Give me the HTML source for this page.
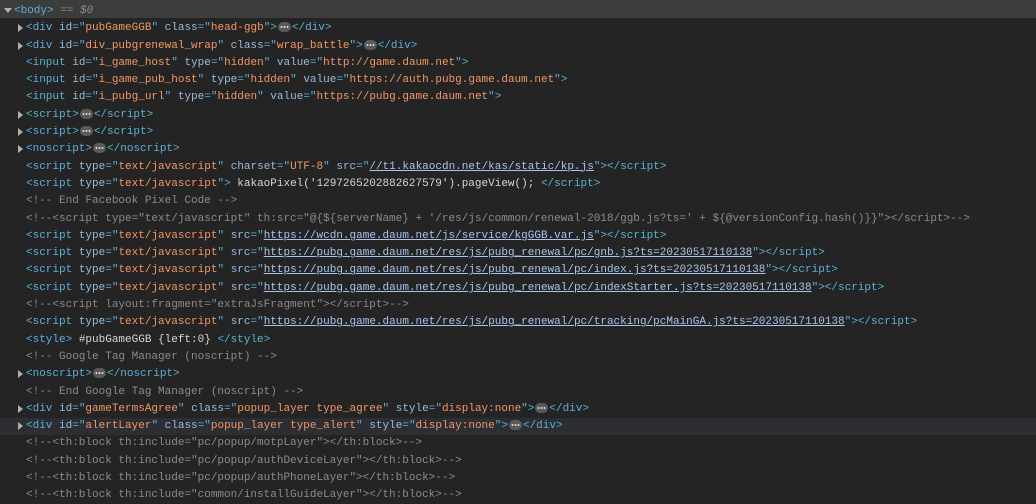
<!DOCTYPE html>
<html><head><meta charset="utf-8"><style>
html,body{margin:0;padding:0;background:#242424;width:1036px;height:504px;overflow:hidden;position:relative}
#hb{position:absolute;left:0;top:0;width:1036px;height:18px;background:#3c3c3c}
#w{position:relative;font-family:"Liberation Mono",monospace;font-size:11px;color:#d6d6d6;padding-top:3px}
.r{height:17.3px;line-height:17.3px;white-space:pre;position:relative;padding-left:26px}
.r.b{padding-left:14px}
.sel{background:#2c2e33}
.t{color:#5db0d7}.a{color:#9bbbdc}.v{color:#f29766}.c{color:#8b8b8b}.l{color:#a9c4ec;text-decoration:underline}
.ar{position:absolute;left:18px;top:4px;width:0;height:0;border-top:4px solid transparent;border-bottom:4px solid transparent;border-left:5px solid #b0b0b0}
.ad{position:absolute;left:4px;top:5px;width:0;height:0;border-left:4px solid transparent;border-right:4px solid transparent;border-top:5px solid #b0b0b0}
.e{display:inline-block;width:13px;height:10px;vertical-align:middle;margin:0 1px;position:relative;top:0}
.g{color:#8b8b8b;font-style:italic}
</style></head><body>
<div id="hb"></div>
<svg width="0" height="0" style="position:absolute"><defs><symbol id="el" viewBox="0 0 13 10"><rect x="0" y="0" width="13" height="10" rx="5" fill="#5a5a5a"/><circle cx="3.5" cy="5" r="1" fill="#ddd"/><circle cx="6.5" cy="5" r="1" fill="#ddd"/><circle cx="9.5" cy="5" r="1" fill="#ddd"/></symbol></defs></svg>
<div id="w">
<div class="r b"><span class="ad"></span><span class="t">&lt;body&gt;</span> <span class="g">== $0</span></div>
<div class="r"><span class="ar"></span><span class="t">&lt;div</span> <span class="a">id</span><span class="t">="</span><span class="v">pubGameGGB</span><span class="t">"</span> <span class="a">class</span><span class="t">="</span><span class="v">head-ggb</span><span class="t">"&gt;</span><svg class="e"><use href="#el"/></svg><span class="t">&lt;/div&gt;</span></div>
<div class="r"><span class="ar"></span><span class="t">&lt;div</span> <span class="a">id</span><span class="t">="</span><span class="v">div_pubgrenewal_wrap</span><span class="t">"</span> <span class="a">class</span><span class="t">="</span><span class="v">wrap_battle</span><span class="t">"&gt;</span><svg class="e"><use href="#el"/></svg><span class="t">&lt;/div&gt;</span></div>
<div class="r"><span class="t">&lt;input</span> <span class="a">id</span><span class="t">="</span><span class="v">i_game_host</span><span class="t">"</span> <span class="a">type</span><span class="t">="</span><span class="v">hidden</span><span class="t">"</span> <span class="a">value</span><span class="t">="</span><span class="v">http://game.daum.net</span><span class="t">"&gt;</span></div>
<div class="r"><span class="t">&lt;input</span> <span class="a">id</span><span class="t">="</span><span class="v">i_game_pub_host</span><span class="t">"</span> <span class="a">type</span><span class="t">="</span><span class="v">hidden</span><span class="t">"</span> <span class="a">value</span><span class="t">="</span><span class="v">https://auth.pubg.game.daum.net</span><span class="t">"&gt;</span></div>
<div class="r"><span class="t">&lt;input</span> <span class="a">id</span><span class="t">="</span><span class="v">i_pubg_url</span><span class="t">"</span> <span class="a">type</span><span class="t">="</span><span class="v">hidden</span><span class="t">"</span> <span class="a">value</span><span class="t">="</span><span class="v">https://pubg.game.daum.net</span><span class="t">"&gt;</span></div>
<div class="r"><span class="ar"></span><span class="t">&lt;script&gt;</span><svg class="e"><use href="#el"/></svg><span class="t">&lt;/script&gt;</span></div>
<div class="r"><span class="ar"></span><span class="t">&lt;script&gt;</span><svg class="e"><use href="#el"/></svg><span class="t">&lt;/script&gt;</span></div>
<div class="r"><span class="ar"></span><span class="t">&lt;noscript&gt;</span><svg class="e"><use href="#el"/></svg><span class="t">&lt;/noscript&gt;</span></div>
<div class="r"><span class="t">&lt;script</span> <span class="a">type</span><span class="t">="</span><span class="v">text/javascript</span><span class="t">"</span> <span class="a">charset</span><span class="t">="</span><span class="v">UTF-8</span><span class="t">"</span> <span class="a">src</span><span class="t">="</span><span class="l">//t1.kakaocdn.net/kas/static/kp.js</span><span class="t">"&gt;&lt;/script&gt;</span></div>
<div class="r"><span class="t">&lt;script</span> <span class="a">type</span><span class="t">="</span><span class="v">text/javascript</span><span class="t">"&gt;</span> kakaoPixel('1297265202882627579').pageView(); <span class="t">&lt;/script&gt;</span></div>
<div class="r"><span class="c">&lt;!-- End Facebook Pixel Code --&gt;</span></div>
<div class="r"><span class="c">&lt;!--&lt;script type="text/javascript" th:src="@{${serverName} + '/res/js/common/renewal-2018/ggb.js?ts=' + ${@versionConfig.hash()}}"&gt;&lt;/script&gt;--&gt;</span></div>
<div class="r"><span class="t">&lt;script</span> <span class="a">type</span><span class="t">="</span><span class="v">text/javascript</span><span class="t">"</span> <span class="a">src</span><span class="t">="</span><span class="l">https://wcdn.game.daum.net/js/service/kgGGB.var.js</span><span class="t">"&gt;&lt;/script&gt;</span></div>
<div class="r"><span class="t">&lt;script</span> <span class="a">type</span><span class="t">="</span><span class="v">text/javascript</span><span class="t">"</span> <span class="a">src</span><span class="t">="</span><span class="l">https://pubg.game.daum.net/res/js/pubg_renewal/pc/gnb.js?ts=20230517110138</span><span class="t">"&gt;&lt;/script&gt;</span></div>
<div class="r"><span class="t">&lt;script</span> <span class="a">type</span><span class="t">="</span><span class="v">text/javascript</span><span class="t">"</span> <span class="a">src</span><span class="t">="</span><span class="l">https://pubg.game.daum.net/res/js/pubg_renewal/pc/index.js?ts=20230517110138</span><span class="t">"&gt;&lt;/script&gt;</span></div>
<div class="r"><span class="t">&lt;script</span> <span class="a">type</span><span class="t">="</span><span class="v">text/javascript</span><span class="t">"</span> <span class="a">src</span><span class="t">="</span><span class="l">https://pubg.game.daum.net/res/js/pubg_renewal/pc/indexStarter.js?ts=20230517110138</span><span class="t">"&gt;&lt;/script&gt;</span></div>
<div class="r"><span class="c">&lt;!--&lt;script layout:fragment="extraJsFragment"&gt;&lt;/script&gt;--&gt;</span></div>
<div class="r"><span class="t">&lt;script</span> <span class="a">type</span><span class="t">="</span><span class="v">text/javascript</span><span class="t">"</span> <span class="a">src</span><span class="t">="</span><span class="l">https://pubg.game.daum.net/res/js/pubg_renewal/pc/tracking/pcMainGA.js?ts=20230517110138</span><span class="t">"&gt;&lt;/script&gt;</span></div>
<div class="r"><span class="t">&lt;style&gt;</span> #pubGameGGB {left:0} <span class="t">&lt;/style&gt;</span></div>
<div class="r"><span class="c">&lt;!-- Google Tag Manager (noscript) --&gt;</span></div>
<div class="r"><span class="ar"></span><span class="t">&lt;noscript&gt;</span><svg class="e"><use href="#el"/></svg><span class="t">&lt;/noscript&gt;</span></div>
<div class="r"><span class="c">&lt;!-- End Google Tag Manager (noscript) --&gt;</span></div>
<div class="r"><span class="ar"></span><span class="t">&lt;div</span> <span class="a">id</span><span class="t">="</span><span class="v">gameTermsAgree</span><span class="t">"</span> <span class="a">class</span><span class="t">="</span><span class="v">popup_layer type_agree</span><span class="t">"</span> <span class="a">style</span><span class="t">="</span><span class="v">display:none</span><span class="t">"&gt;</span><svg class="e"><use href="#el"/></svg><span class="t">&lt;/div&gt;</span></div>
<div class="r sel"><span class="ar"></span><span class="t">&lt;div</span> <span class="a">id</span><span class="t">="</span><span class="v">alertLayer</span><span class="t">"</span> <span class="a">class</span><span class="t">="</span><span class="v">popup_layer type_alert</span><span class="t">"</span> <span class="a">style</span><span class="t">="</span><span class="v">display:none</span><span class="t">"&gt;</span><svg class="e"><use href="#el"/></svg><span class="t">&lt;/div&gt;</span></div>
<div class="r"><span class="c">&lt;!--&lt;th:block th:include="pc/popup/motpLayer"&gt;&lt;/th:block&gt;--&gt;</span></div>
<div class="r"><span class="c">&lt;!--&lt;th:block th:include="pc/popup/authDeviceLayer"&gt;&lt;/th:block&gt;--&gt;</span></div>
<div class="r"><span class="c">&lt;!--&lt;th:block th:include="pc/popup/authPhoneLayer"&gt;&lt;/th:block&gt;--&gt;</span></div>
<div class="r"><span class="c">&lt;!--&lt;th:block th:include="common/installGuideLayer"&gt;&lt;/th:block&gt;--&gt;</span></div>
</div></body></html>
